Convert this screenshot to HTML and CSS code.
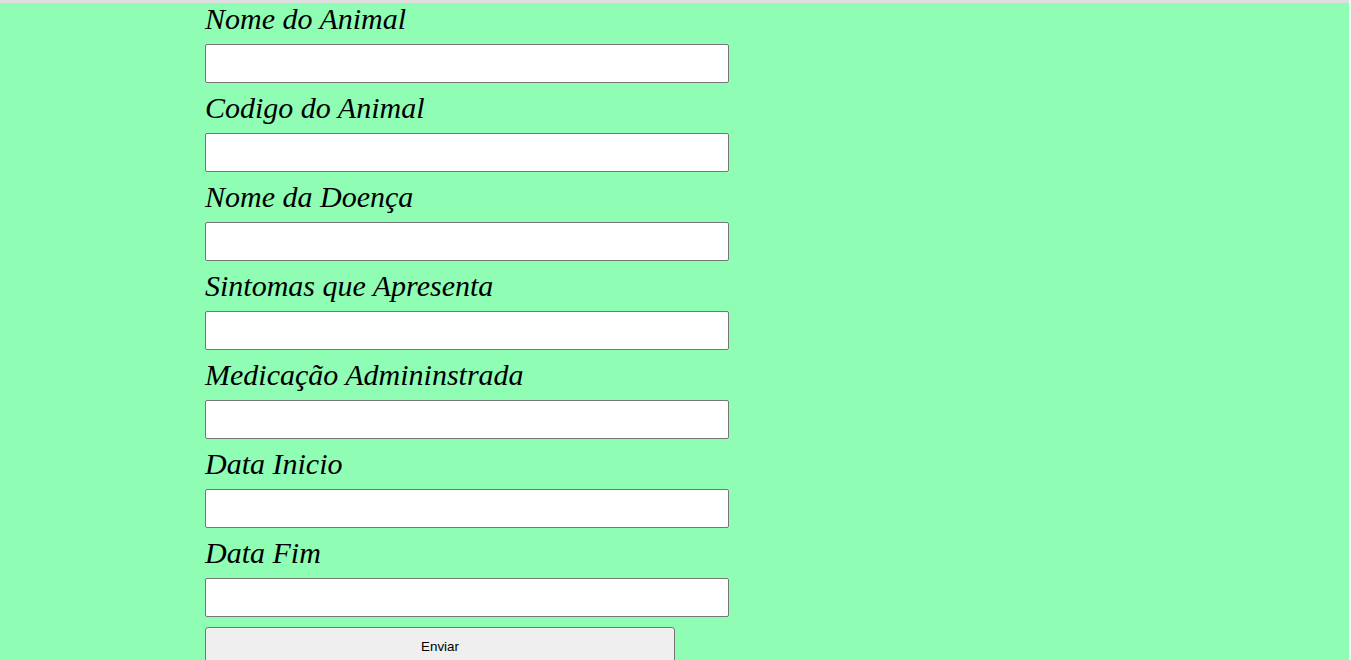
FILE: index.html
```html
<!DOCTYPE html>
<html lang="pt">
<head>
<meta charset="utf-8">
<title>Cadastro</title>
<link rel="stylesheet" href="styles.css">
</head>
<body>
<form class="form">
  <label class="lbl">Nome do Animal</label>
  <input class="field" type="text">
  <label class="lbl">Codigo do Animal</label>
  <input class="field" type="text">
  <label class="lbl">Nome da Doença</label>
  <input class="field" type="text">
  <label class="lbl">Sintomas que Apresenta</label>
  <input class="field" type="text">
  <label class="lbl">Medicação Admininstrada</label>
  <input class="field" type="text">
  <label class="lbl">Data Inicio</label>
  <input class="field" type="text">
  <label class="lbl">Data Fim</label>
  <input class="field" type="text">
  <button class="btn" type="button">Enviar</button>
</form>
</body>
</html>
```
FILE: styles.css
```css
html {
  background: #f4f4f4;
}
body {
  margin: 0 2px 0 0;
  background: #8ffdb3;
  border-top: 3px solid #dedede;
  min-height: 700px;
  overflow: hidden;
}
.form {
  margin: -9px 0 0 205px;
  display: flex;
  flex-direction: column;
  align-items: flex-start;
}
.lbl {
  display: block;
  font-family: "Liberation Serif", "Times New Roman", serif;
  font-style: italic;
  font-size: 30px;
  line-height: 34px;
  padding-top: 8px;
  height: 34px;
  margin-bottom: 8px;
  color: #000;
}
.field {
  box-sizing: border-box;
  width: 524px;
  height: 39px;
  margin: 0;
  border: 1px solid #767676;
  border-radius: 2px;
  background: #fff;
  padding: 1px 2px;
}
.btn {
  box-sizing: border-box;
  margin-top: 10px;
  width: 470px;
  height: 38px;
  border: 1px solid #767676;
  border-radius: 3px;
  background: #efefef;
  font-family: "Liberation Sans", Arial, sans-serif;
  font-size: 13.33px;
  color: #000;
  padding: 0;
}
```
